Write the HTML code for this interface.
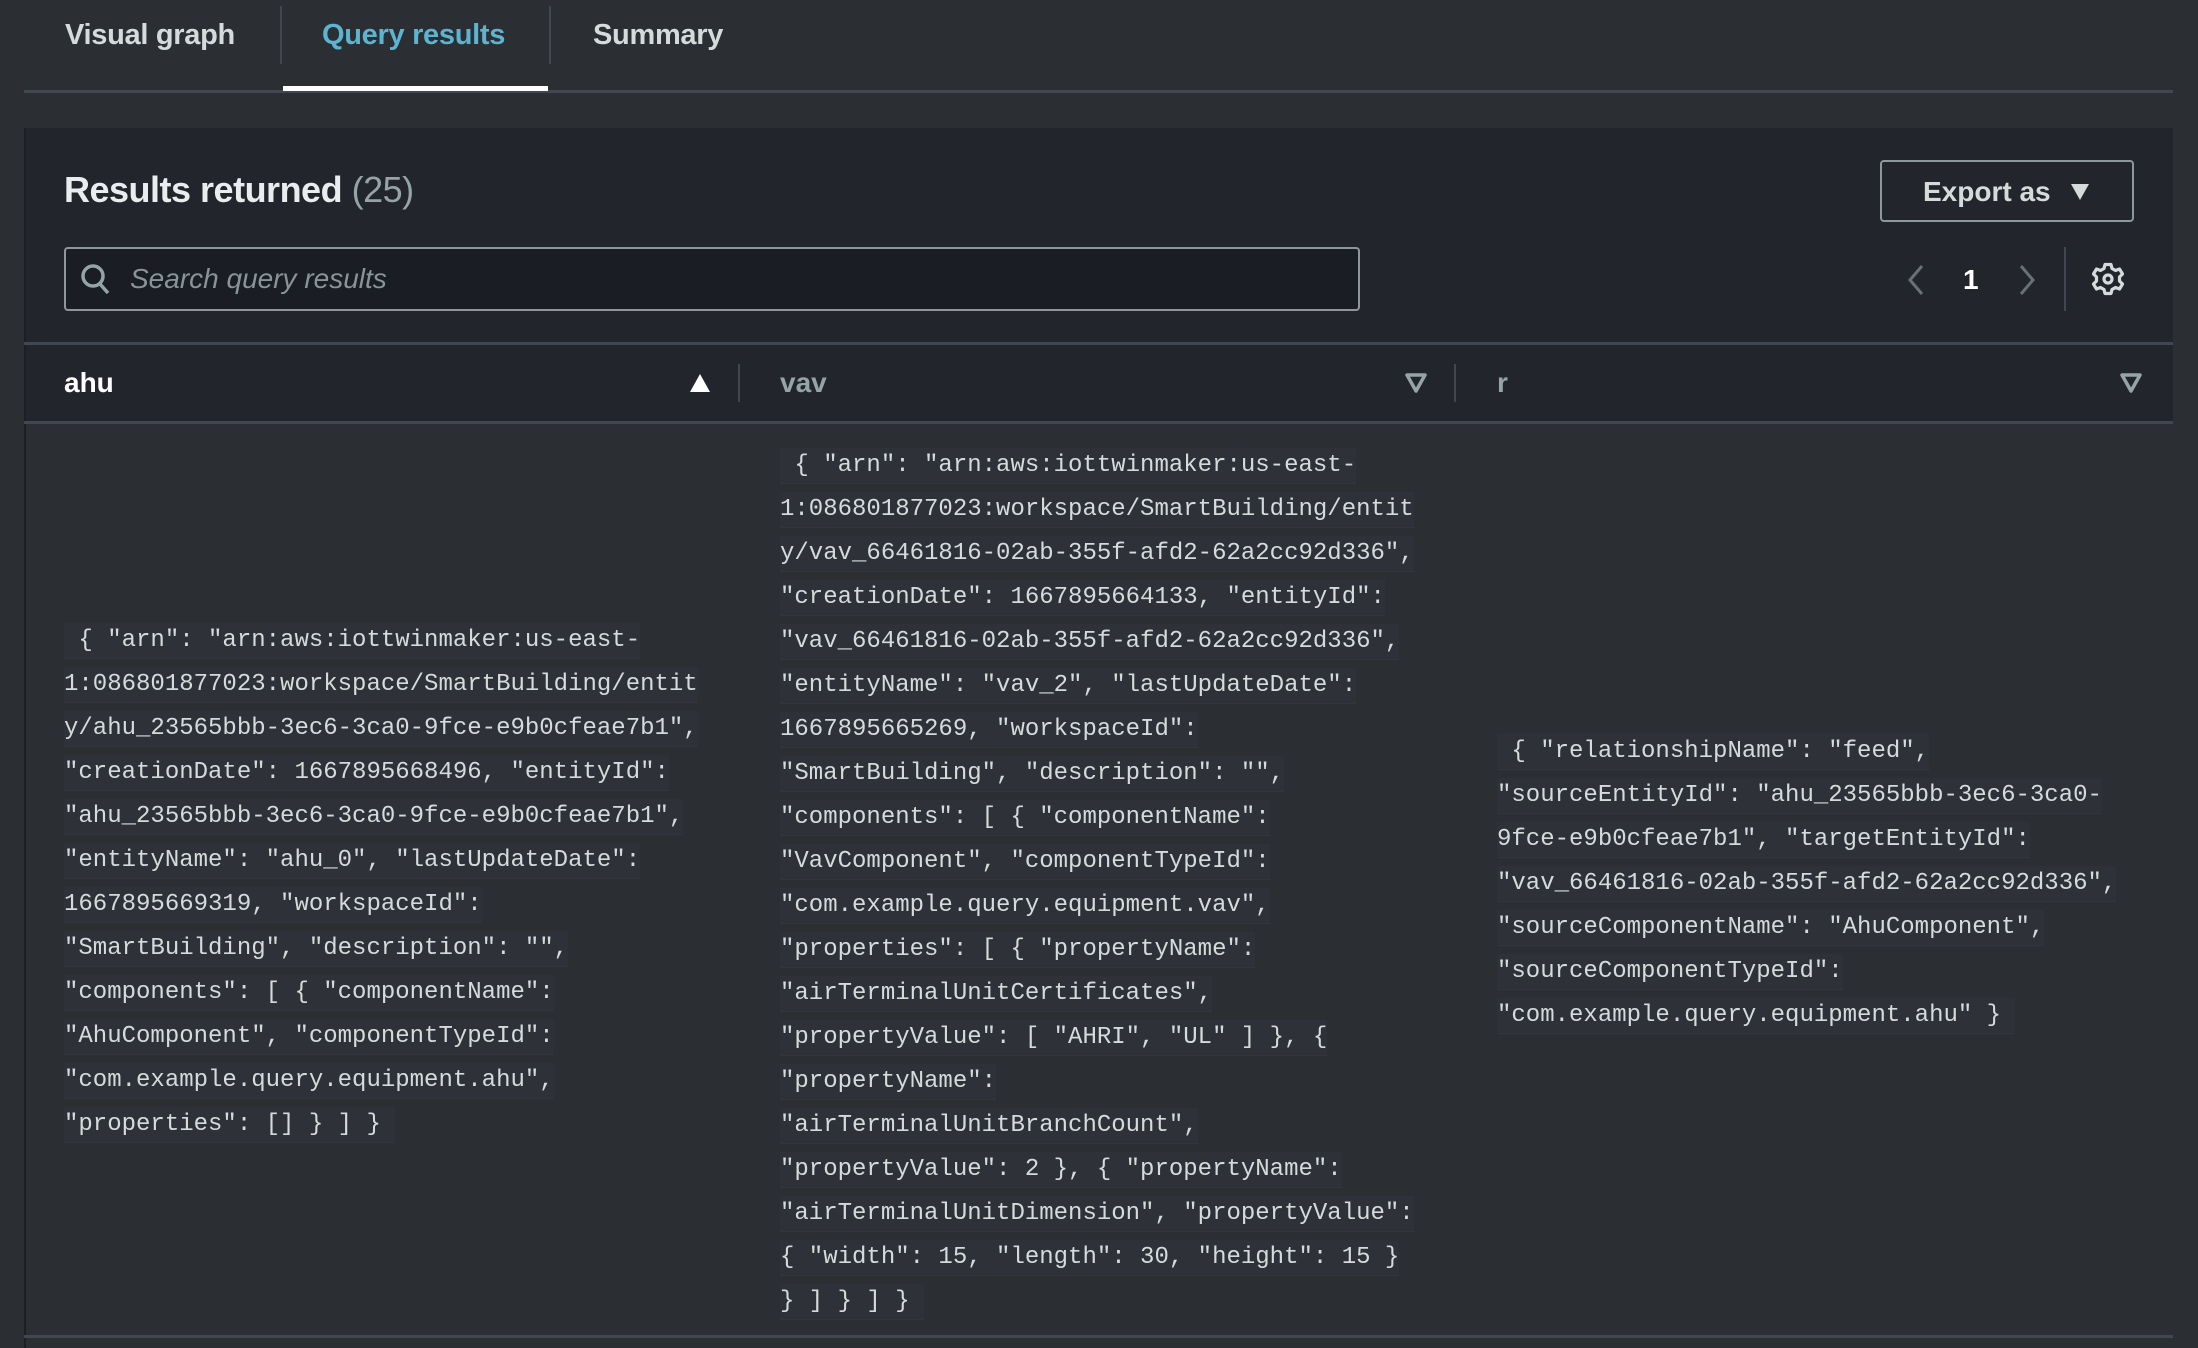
<!DOCTYPE html>
<html><head><meta charset="utf-8"><style>
*{margin:0;padding:0;box-sizing:border-box}
html,body{width:2198px;height:1348px;overflow:hidden}
body{background:#2b2e33;position:relative;font-family:"Liberation Sans",sans-serif;color:#d5dbdb}
.abs{position:absolute}
.tab{position:absolute;top:19px;font-size:29px;font-weight:bold;color:#d5dbdb;letter-spacing:-0.3px}
.sep{position:absolute;top:6px;width:2px;height:58px;background:#414750}
.panel{position:absolute;left:24px;top:128px;width:2149px;height:1220px;background:#22252b;border-left:2px solid #1d1f23}
.body{position:absolute;left:24px;top:423px;width:2149px;height:925px;background:#2b2e33;border-left:2px solid #1d1f23}
.hl{position:absolute;height:3px;background:#414750}
.code{position:absolute;font-family:"Liberation Mono",monospace;font-size:24px;line-height:44px;color:#d5dbdb}
.code div{height:44px;white-space:pre}
.code span{background:#2e3137;padding:4px 0;border-bottom:1px solid #33363c}
</style></head><body>
<div class="tab" style="left:65px">Visual graph</div>
<div class="sep" style="left:280px"></div>
<div class="tab" style="left:322px;color:#5cb4d1">Query results</div>
<div class="sep" style="left:549px"></div>
<div class="tab" style="left:593px">Summary</div>
<div class="hl" style="left:24px;top:90px;width:2149px;background:#414750"></div>
<div class="abs" style="left:283px;top:86px;width:265px;height:5px;background:#fff"></div>

<div class="panel"></div>
<div class="abs" style="left:64px;top:169px;font-size:36px;font-weight:bold;color:#eaeded;letter-spacing:-0.5px">Results returned <span style="font-weight:normal;color:#95a5a6">(25)</span></div>
<div class="abs" style="left:1880px;top:160px;width:254px;height:62px;border:2px solid #8d9999;border-radius:4px;font-size:28px;font-weight:bold;color:#d5dbdb;padding:14px 0 0 41px">Export as <svg width="20" height="18" style="margin-left:12px;vertical-align:0" viewBox="0 0 20 18"><path d="M1 1H19L10 17Z" fill="#d5dbdb"/></svg></div>

<div class="abs" style="left:64px;top:247px;width:1296px;height:64px;background:#1a1d23;border:2px solid #8d9999;border-radius:4px"></div>
<svg class="abs" style="left:80px;top:263px" width="32" height="34" viewBox="0 0 32 34"><circle cx="13" cy="13" r="10" fill="none" stroke="#95a5a6" stroke-width="3.5"/><path d="M20 21L28 30" stroke="#95a5a6" stroke-width="3.5"/></svg>
<div class="abs" style="left:130px;top:263px;font-size:28px;font-style:italic;color:#879596">Search query results</div>

<svg class="abs" style="left:1905px;top:264px" width="22" height="32" viewBox="0 0 22 32"><path d="M17 2L5 16L17 30" fill="none" stroke="#687078" stroke-width="3"/></svg>
<div class="abs" style="left:1963px;top:264px;font-size:28px;font-weight:bold;color:#fff">1</div>
<svg class="abs" style="left:2016px;top:264px" width="22" height="32" viewBox="0 0 22 32"><path d="M5 2L17 16L5 30" fill="none" stroke="#687078" stroke-width="3"/></svg>
<div class="abs" style="left:2064px;top:247px;width:2px;height:64px;background:#414750"></div>
<svg class="abs" style="left:2091px;top:262px" width="34" height="34" viewBox="-17 -17 34 34">
<g fill="none" stroke="#d5dbdb" stroke-width="3.2" stroke-linejoin="round">
<path d="M-3 -14.5H3L4 -10.5L7.5 -8.5L11.5 -10L14.5 -5L11.5 -2V2L14.5 5L11.5 10L7.5 8.5L4 10.5L3 14.5H-3L-4 10.5L-7.5 8.5L-11.5 10L-14.5 5L-11.5 2V-2L-14.5 -5L-11.5 -10L-7.5 -8.5L-4 -10.5Z"/>
<circle r="4"/></g></svg>

<div class="hl" style="left:24px;top:342px;width:2149px"></div>
<div class="abs" style="left:64px;top:367px;font-size:28px;font-weight:bold;color:#fff">ahu</div>
<svg class="abs" style="left:689px;top:373px" width="22" height="20" viewBox="0 0 22 20"><path d="M11 1L21 19H1Z" fill="#fff"/></svg>
<div class="abs" style="left:738px;top:364px;width:2px;height:38px;background:#414750"></div>
<div class="abs" style="left:780px;top:367px;font-size:28px;font-weight:bold;color:#95a5a6">vav</div>
<svg class="abs" style="left:1405px;top:373px" width="22" height="20" viewBox="0 0 22 20"><path d="M2 2H20L11 18Z" fill="none" stroke="#95a5a6" stroke-width="3.5" stroke-linejoin="round"/></svg>
<div class="abs" style="left:1454px;top:364px;width:2px;height:38px;background:#414750"></div>
<div class="abs" style="left:1497px;top:367px;font-size:28px;font-weight:bold;color:#95a5a6">r</div>
<svg class="abs" style="left:2120px;top:373px" width="22" height="20" viewBox="0 0 22 20"><path d="M2 2H20L11 18Z" fill="none" stroke="#95a5a6" stroke-width="3.5" stroke-linejoin="round"/></svg>

<div class="body"></div>
<div class="hl" style="left:24px;top:421px;width:2149px"></div>
<div class="hl" style="left:24px;top:1335px;width:2149px"></div>

<div class="code" style="left:64px;top:619px"><div><span> { "arn": "arn:aws:iottwinmaker:us-east-</span></div><div><span>1:086801877023:workspace/SmartBuilding/entit</span></div><div><span>y/ahu_23565bbb-3ec6-3ca0-9fce-e9b0cfeae7b1",</span></div><div><span>"creationDate": 1667895668496, "entityId":</span></div><div><span>"ahu_23565bbb-3ec6-3ca0-9fce-e9b0cfeae7b1",</span></div><div><span>"entityName": "ahu_0", "lastUpdateDate":</span></div><div><span>1667895669319, "workspaceId":</span></div><div><span>"SmartBuilding", "description": "",</span></div><div><span>"components": [ { "componentName":</span></div><div><span>"AhuComponent", "componentTypeId":</span></div><div><span>"com.example.query.equipment.ahu",</span></div><div><span>"properties": [] } ] } </span></div></div>

<div class="code" style="left:780px;top:444px"><div><span> { "arn": "arn:aws:iottwinmaker:us-east-</span></div><div><span>1:086801877023:workspace/SmartBuilding/entit</span></div><div><span>y/vav_66461816-02ab-355f-afd2-62a2cc92d336",</span></div><div><span>"creationDate": 1667895664133, "entityId":</span></div><div><span>"vav_66461816-02ab-355f-afd2-62a2cc92d336",</span></div><div><span>"entityName": "vav_2", "lastUpdateDate":</span></div><div><span>1667895665269, "workspaceId":</span></div><div><span>"SmartBuilding", "description": "",</span></div><div><span>"components": [ { "componentName":</span></div><div><span>"VavComponent", "componentTypeId":</span></div><div><span>"com.example.query.equipment.vav",</span></div><div><span>"properties": [ { "propertyName":</span></div><div><span>"airTerminalUnitCertificates",</span></div><div><span>"propertyValue": [ "AHRI", "UL" ] }, {</span></div><div><span>"propertyName":</span></div><div><span>"airTerminalUnitBranchCount",</span></div><div><span>"propertyValue": 2 }, { "propertyName":</span></div><div><span>"airTerminalUnitDimension", "propertyValue":</span></div><div><span>{ "width": 15, "length": 30, "height": 15 }</span></div><div><span>} ] } ] } </span></div></div>

<div class="code" style="left:1497px;top:730px"><div><span> { "relationshipName": "feed",</span></div><div><span>"sourceEntityId": "ahu_23565bbb-3ec6-3ca0-</span></div><div><span>9fce-e9b0cfeae7b1", "targetEntityId":</span></div><div><span>"vav_66461816-02ab-355f-afd2-62a2cc92d336",</span></div><div><span>"sourceComponentName": "AhuComponent",</span></div><div><span>"sourceComponentTypeId":</span></div><div><span>"com.example.query.equipment.ahu" } </span></div></div>
</body></html>
